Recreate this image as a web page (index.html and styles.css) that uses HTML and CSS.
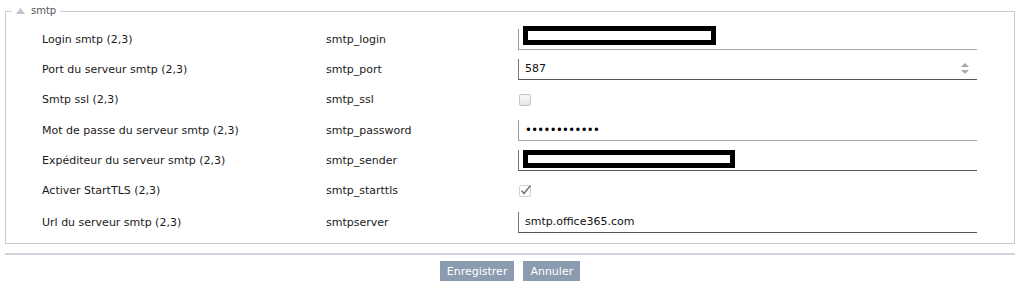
FILE: index.html
```html
<!DOCTYPE html>
<html lang="fr">
<head>
    <meta charset="UTF-8">
    <title>Paramètres smtp</title>
    <link rel="stylesheet" href="styles.css">
</head>
<body>
    <fieldset class="group">
        <legend>
            <svg class="toggle" width="9" height="6" viewBox="0 0 9 6"><path d="M4.5 0 L9 6 L0 6 Z" fill="#c4c4c4"/></svg>
            <span>smtp</span>
        </legend>

        <div class="row">
            <div class="label">Login smtp (2,3)</div>
            <div class="key">smtp_login</div>
            <div class="field"><span class="redact redact-login"></span></div>
        </div>

        <div class="row">
            <div class="label">Port du serveur smtp (2,3)</div>
            <div class="key">smtp_port</div>
            <div class="field field-dark">
                <span class="value">587</span>
                <svg class="spin" width="8" height="11" viewBox="0 0 8 11">
                    <path d="M4 0 L8 4 L0 4 Z" fill="#a8a8a8"/>
                    <path d="M0 7 L8 7 L4 11 Z" fill="#a8a8a8"/>
                </svg>
            </div>
        </div>

        <div class="row row-check">
            <div class="label">Smtp ssl (2,3)</div>
            <div class="key">smtp_ssl</div>
            <div class="check-cell"><span class="check"></span></div>
        </div>

        <div class="row">
            <div class="label">Mot de passe du serveur smtp (2,3)</div>
            <div class="key">smtp_password</div>
            <div class="field"><span class="value dots">&bull;&bull;&bull;&bull;&bull;&bull;&bull;&bull;&bull;&bull;&bull;&bull;</span></div>
        </div>

        <div class="row">
            <div class="label">Expéditeur du serveur smtp (2,3)</div>
            <div class="key">smtp_sender</div>
            <div class="field field-dark"><span class="redact redact-sender"></span></div>
        </div>

        <div class="row row-check">
            <div class="label">Activer StartTLS (2,3)</div>
            <div class="key">smtp_starttls</div>
            <div class="check-cell">
                <span class="check check-on">
                    <svg width="13" height="13" viewBox="0 0 13 13">
                        <path d="M2.5 6.5 L5 9.5 L11.5 1.5" fill="none" stroke="#7a7a7a" stroke-width="1.6"/>
                    </svg>
                </span>
            </div>
        </div>

        <div class="row row-last">
            <div class="label">Url du serveur smtp (2,3)</div>
            <div class="key">smtpserver</div>
            <div class="field field-dark"><span class="value">smtp.office365.com</span></div>
        </div>
    </fieldset>

    <div class="actions">
        <button class="btn">Enregistrer</button>
        <button class="btn">Annuler</button>
    </div>
</body>
</html>
```

FILE: styles.css
```css
body {
    margin: 0;
    font-family: "DejaVu Sans", Verdana, sans-serif;
    font-size: 11px;
    color: #1a1a1a;
    background: #fff;
}

.group {
    margin: 5px 5px 0;
    padding: 7px 0 6px 6px;
    border: 1px solid #c6cbd5;
}

.group legend {
    display: flex;
    align-items: center;
    gap: 6px;
    padding: 0 4px 0 3px;
    font-size: 10px;
    line-height: 12px;
    color: #555;
}

.toggle {
    margin-left: 1px;
    margin-top: -1px;
}

.row {
    display: flex;
    align-items: center;
    height: 30px;
    padding-left: 30px;
}

.row-check {
    height: 31px;
}

.row-last {
    margin-top: 1px;
}

.label {
    width: 284px;
}

.key {
    width: 192px;
}

.field {
    box-sizing: border-box;
    display: flex;
    align-items: center;
    width: 459px;
    height: 21px;
    padding-left: 6px;
    border-left: 1px solid #9a9a9a;
    border-bottom: 1px solid #a6a6a6;
}

.field-dark {
    border-left-color: #777;
    border-bottom-color: #555;
}

.value {
    flex: 1;
    color: #111;
}

.dots {
    letter-spacing: -0.6px;
    font-size: 11.5px;
    color: #000;
}

.spin {
    margin-right: 8px;
}

.redact {
    box-sizing: border-box;
    display: block;
    margin-left: -2px;
    border: 5px solid #000;
    background: #fff;
}

.redact-login {
    width: 193px;
    height: 19px;
    margin-bottom: 6px;
}

.redact-sender {
    width: 212px;
    height: 18px;
    margin-bottom: 2px;
}

.check-cell {
    display: flex;
    align-items: center;
    width: 459px;
    padding-left: 1px;
}

.check {
    box-sizing: border-box;
    display: block;
    width: 12px;
    height: 12px;
    border: 1px solid #c4c4c4;
    border-radius: 2px;
    background: linear-gradient(#fafafa, #e6e6e6);
}

.check-on {
    position: relative;
    border-color: #d4d4d4;
    background: #fff;
}

.check-on svg {
    position: absolute;
    left: -1px;
    top: -2px;
}

.actions {
    margin: 9px 5px 0;
    padding-top: 6px;
    border-top: 2px solid #cdd3dc;
    display: flex;
    justify-content: center;
    gap: 9px;
}

.btn {
    height: 20px;
    padding: 0 7px;
    border: none;
    background: #8b9bb0;
    color: #fff;
    font-family: "DejaVu Sans", Verdana, sans-serif;
    font-size: 11px;
    cursor: pointer;
}

.btn:hover {
    background: #7a8aa0;
}
```
